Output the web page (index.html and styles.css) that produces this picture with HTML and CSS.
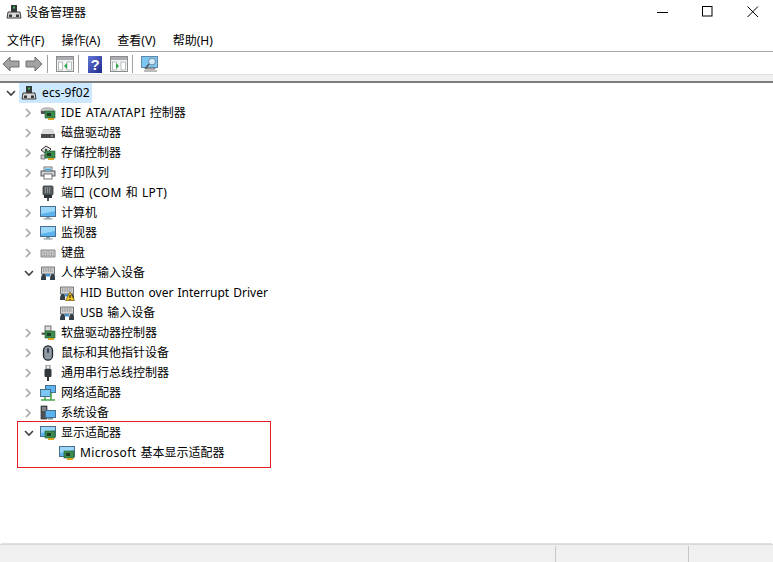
FILE: index.html
```html
<!DOCTYPE html>
<html lang="zh-CN">
<head>
<meta charset="utf-8">
<title>设备管理器</title>
<link rel="stylesheet" href="styles.css">
</head>
<body>
<svg class="defs" width="0" height="0" aria-hidden="true">
  <defs>
    <symbol id="chev-r" viewBox="0 0 10 12"><path d="M3 2l4 4-4 4" fill="none" stroke="#a6a6a6" stroke-width="1.6"/></symbol>
    <symbol id="chev-d" viewBox="0 0 12 10"><path d="M2 3l4 4 4-4" fill="none" stroke="#404040" stroke-width="1.6"/></symbol>
    <symbol id="host" viewBox="0 0 16 16"><rect x="5" y="1" width="6" height="7" fill="#33393c"/><rect x="7" y="2.5" width="2" height="2" fill="#3fc04a"/><path d="M2 8h12l1 6H1z" fill="#d9d9d9" stroke="#3a3a3a"/><rect x="3" y="10.5" width="3" height="2.5" fill="#33393c"/><rect x="10" y="10.5" width="3" height="2.500" fill="#33393c"/></symbol>
    <symbol id="card" viewBox="0 0 16 16"><rect x="5" y="6" width="10" height="7" fill="#3c8a4e" stroke="#1f5f30" stroke-width=".6"/><rect x="7" y="8" width="4" height="3" fill="#1d3d26"/><rect x="8" y="13" width="6" height="2" fill="#d9a520"/></symbol>
    <symbol id="ide" viewBox="0 0 16 16"><path d="M1 5c1-3 12-3 13 0v3H1z" fill="#c8c8c8" stroke="#808080" stroke-width=".6"/><rect x="1" y="6" width="9" height="3" fill="#555"/><use href="#card"/></symbol>
    <symbol id="disk" viewBox="0 0 16 16"><path d="M3 4h10l2 5H1z" fill="#dcdcdc"/><rect x="1" y="9" width="14" height="4" fill="#4a4a4a"/><rect x="11" y="10.5" width="2" height="1" fill="#9fe09f"/></symbol>
    <symbol id="store" viewBox="0 0 16 16"><path d="M1 5l5-4 5 3-5 5z" fill="#e5e5e5" stroke="#333" stroke-width="1"/><circle cx="6" cy="5" r="1.3" fill="#444"/><path d="M1 10h4v4H1z" fill="#ccc" stroke="#555" stroke-width=".7"/><use href="#card"/></symbol>
    <symbol id="printer" viewBox="0 0 16 16"><rect x="4" y="2" width="8" height="5" fill="#f5f5f5" stroke="#555" stroke-width=".8"/><rect x="1" y="6" width="14" height="5" fill="#d0d3d6" stroke="#333" stroke-width=".8"/><rect x="5" y="3.500" width="6" height="2" fill="#4aa3df"/><rect x="4" y="9" width="8" height="5" fill="#fff" stroke="#555" stroke-width=".8"/></symbol>
    <symbol id="port" viewBox="0 0 16 16"><rect x="3" y="1" width="10" height="9" rx="1" fill="#5a5f63" stroke="#2f3336" stroke-width=".8"/><path d="M5 3h6M5 5h6M5 7h6" stroke="#c9c9c9" stroke-width=".9" stroke-dasharray="1 1"/><path d="M4 10h8v3H4z" fill="#2f3336"/><rect x="7" y="13" width="2" height="3" fill="#555"/></symbol>
    <symbol id="monitor" viewBox="0 0 16 16"><rect x=".5" y="1.500" width="15" height="10" fill="#5cb4ee" stroke="#4a6f8c"/><path d="M1 2h14v4L1 9z" fill="#9ad6f8"/><path d="M6 12h4v1.500H6z" fill="#8aa0b0"/><rect x="3.500" y="13.500" width="9" height="1" fill="#7b8e9c"/></symbol>
    <symbol id="keyboard" viewBox="0 0 16 16"><path d="M1 5h14v7H1z" fill="#d4d4d4" stroke="#666" stroke-width=".8"/><path d="M2.500 7h11M2.500 8.700h11M2.500 10.400h11" stroke="#7b7b7b" stroke-width=".9" stroke-dasharray="1 .7"/></symbol>
    <symbol id="hid" viewBox="0 0 16 16"><path d="M1.500 2h13v7h-13z" fill="#d4d4d4" stroke="#555" stroke-width=".8"/><path d="M3 4h10M3 6h10" stroke="#6b6b6b" stroke-width=".9" stroke-dasharray="1 .7"/><path d="M1 15c0-5 1-6 3-6s2 1 2 6z" fill="#33404a"/><path d="M10 15c0-5 1-6 3-6s2 1 2 6z" fill="#33404a"/><rect x="6" y="9" width="4" height="2.500" fill="#3f94d8"/></symbol>
    <symbol id="warn" viewBox="0 0 16 16"><path d="M11 7l4.500 8.500h-9z" fill="#f7c325" stroke="#6b5200" stroke-width=".7"/><path d="M11 10v3M11 14v1" stroke="#222" stroke-width="1.100"/></symbol>
    <symbol id="floppy" viewBox="0 0 16 16"><rect x="5" y="1" width="6" height="5" fill="#ddd" stroke="#555" stroke-width=".8"/><path d="M1 7h10v3H1z" fill="#c8c8c8"/><rect x="2" y="8" width="7" height="1.500" fill="#444"/><use href="#card"/></symbol>
    <symbol id="mouse" viewBox="0 0 16 16"><rect x="3.500" y=".8" width="9" height="14.400" rx="4.500" fill="#8f99a3" stroke="#23282c" stroke-width="1.300"/><rect x="7" y="3" width="2" height="5" rx="1" fill="#39424a"/></symbol>
    <symbol id="usb" viewBox="0 0 16 16"><rect x="6" y="0" width="4" height="4" fill="#e8e8e8" stroke="#555" stroke-width=".7"/><rect x="4.500" y="4" width="7" height="8" rx="1" fill="#33373a"/><rect x="7" y="12" width="2" height="4" fill="#33373a"/></symbol>
    <symbol id="net" viewBox="0 0 16 16"><rect x="5.500" y=".5" width="10" height="7" fill="#5cb4ee" stroke="#4a6f8c"/><rect x=".5" y="4.500" width="10" height="7" fill="#7cc6f3" stroke="#4a6f8c"/><path d="M1 15h14M5 12v3M11 8v7" stroke="#46a84d" stroke-width="1.600"/></symbol>
    <symbol id="system" viewBox="0 0 16 16"><rect x="1" y="1" width="6" height="13" fill="#4c5156" stroke="#2f3336" stroke-width=".7"/><path d="M2 3h4M2 5h4" stroke="#bbb"/><rect x="5.500" y="5.500" width="10" height="7" fill="#5cb4ee" stroke="#4a6f8c"/><rect x="8" y="13" width="5" height="1.500" fill="#7b8e9c"/></symbol>
    <symbol id="display" viewBox="0 0 16 16"><rect x=".5" y="1.500" width="15" height="10" fill="#5cb4ee" stroke="#4a6f8c"/><path d="M1 2h14v3L1 8z" fill="#9ad6f8"/><use href="#card"/></symbol>
    <symbol id="panel" viewBox="0 0 18 17"><rect x=".5" y=".5" width="17" height="15" fill="#f3f3f3" stroke="#8c8c8c"/><rect x="1" y="1" width="16" height="3" fill="#a9adb1"/><rect x="2.500" y="6" width="4" height="8" fill="#fff" stroke="#9aa" stroke-width=".7"/><rect x="11" y="6" width="4.500" height="8" fill="#fff" stroke="#9aa" stroke-width=".7"/></symbol>
  </defs>
</svg>
<div class="window">
  <header class="titlebar">
    <div class="title-left"><svg class="ic16"><use href="#host"/></svg><span>设备管理器</span></div>
    <div class="win-btns">
      <svg class="win-btn" viewBox="0 0 12 12"><path d="M0 6.500h11" stroke="#000" fill="none"/></svg>
      <svg class="win-btn" viewBox="0 0 12 12"><rect x=".5" y=".5" width="9.500" height="9.500" stroke="#000" fill="none"/></svg>
      <svg class="win-btn" viewBox="0 0 12 12"><path d="M.5 .5l10.500 10.500M11 .5L.5 11" stroke="#000" fill="none"/></svg>
    </div>
  </header>
  <nav class="menubar"><span>文件(F)</span><span>操作(A)</span><span>查看(V)</span><span>帮助(H)</span></nav>
  <div class="toolbar">
    <svg class="tb-arrow" viewBox="0 0 18 16"><path d="M1 8l7-7v4h9v6H8v4z" fill="#a3a3a3" stroke="#6e6e6e"/></svg>
    <svg class="tb-arrow" viewBox="0 0 18 16"><path d="M17 8l-7-7v4H1v6h9v4z" fill="#a3a3a3" stroke="#6e6e6e"/></svg>
    <i class="sep"></i>
    <svg class="tb-panel" viewBox="0 0 18 17"><use href="#panel"/><path d="M11 7v6l-3-3z" fill="#2fa84a"/></svg>
    <i class="sep"></i>
    <svg class="tb-help" viewBox="0 0 14 17"><defs><linearGradient id="hg" x1="0" y1="0" x2="1" y2="1"><stop offset="0" stop-color="#6677d8"/><stop offset="1" stop-color="#1a2a8c"/></linearGradient></defs><rect width="14" height="17" fill="url(#hg)"/><text x="7" y="14" class="q">?</text></svg>
    <svg class="tb-panel" viewBox="0 0 18 17"><use href="#panel"/><path d="M6 7v6l3-3z" fill="#2fa84a"/></svg>
    <i class="sep"></i>
    <svg class="tb-scan" viewBox="0 0 18 17"><rect x=".5" y=".5" width="16" height="11" fill="#7cc6f3" stroke="#5e8aa8"/><path d="M5 12h9v1H5zM3 15h13" stroke="#777" fill="none"/><circle cx="11" cy="5.500" r="3.500" fill="#cfe9f8" stroke="#6d8899"/><path d="M8 8l-4 5" stroke="#555" stroke-width="1.500"/></svg>
  </div>
  <div class="band"></div>
  <main class="tree">
    <div class="row lvl0"><svg class="chev-d"><use href="#chev-d"/></svg><span class="root-sel"><svg class="ic16"><use href="#host"/></svg><span class="label tight">ecs-9f02</span></span></div>
    <div class="row lvl1"><svg class="chev-r"><use href="#chev-r"/></svg><svg class="ic16"><use href="#ide"/></svg><span class="label"><span class="lat">IDE ATA/ATAPI</span> 控制器</span></div>
    <div class="row lvl1"><svg class="chev-r"><use href="#chev-r"/></svg><svg class="ic16"><use href="#disk"/></svg><span class="label">磁盘驱动器</span></div>
    <div class="row lvl1"><svg class="chev-r"><use href="#chev-r"/></svg><svg class="ic16"><use href="#store"/></svg><span class="label">存储控制器</span></div>
    <div class="row lvl1"><svg class="chev-r"><use href="#chev-r"/></svg><svg class="ic16"><use href="#printer"/></svg><span class="label">打印队列</span></div>
    <div class="row lvl1"><svg class="chev-r"><use href="#chev-r"/></svg><svg class="ic16"><use href="#port"/></svg><span class="label">端口 <span class="lat">(COM</span> 和 <span class="lat">LPT)</span></span></div>
    <div class="row lvl1"><svg class="chev-r"><use href="#chev-r"/></svg><svg class="ic16"><use href="#monitor"/></svg><span class="label">计算机</span></div>
    <div class="row lvl1"><svg class="chev-r"><use href="#chev-r"/></svg><svg class="ic16"><use href="#monitor"/></svg><span class="label">监视器</span></div>
    <div class="row lvl1"><svg class="chev-r"><use href="#chev-r"/></svg><svg class="ic16"><use href="#keyboard"/></svg><span class="label">键盘</span></div>
    <div class="row lvl1"><svg class="chev-d"><use href="#chev-d"/></svg><svg class="ic16"><use href="#hid"/></svg><span class="label">人体学输入设备</span></div>
    <div class="row lvl2"><svg class="ic16"><use href="#hid"/><use href="#warn"/></svg><span class="label">HID Button over Interrupt Driver</span></div>
    <div class="row lvl2"><svg class="ic16"><use href="#hid"/></svg><span class="label">USB 输入设备</span></div>
    <div class="row lvl1"><svg class="chev-r"><use href="#chev-r"/></svg><svg class="ic16"><use href="#floppy"/></svg><span class="label">软盘驱动器控制器</span></div>
    <div class="row lvl1"><svg class="chev-r"><use href="#chev-r"/></svg><svg class="ic16"><use href="#mouse"/></svg><span class="label">鼠标和其他指针设备</span></div>
    <div class="row lvl1"><svg class="chev-r"><use href="#chev-r"/></svg><svg class="ic16"><use href="#usb"/></svg><span class="label">通用串行总线控制器</span></div>
    <div class="row lvl1"><svg class="chev-r"><use href="#chev-r"/></svg><svg class="ic16"><use href="#net"/></svg><span class="label">网络适配器</span></div>
    <div class="row lvl1"><svg class="chev-r"><use href="#chev-r"/></svg><svg class="ic16"><use href="#system"/></svg><span class="label">系统设备</span></div>
    <div class="highlighted">
      <div class="row lvl1"><svg class="chev-d"><use href="#chev-d"/></svg><svg class="ic16"><use href="#display"/></svg><span class="label">显示适配器</span></div>
      <div class="row lvl2"><svg class="ic16"><use href="#display"/></svg><span class="label"><span class="lat">Microsoft</span> 基本显示适配器</span></div>
      <div class="redbox"></div>
    </div>
  </main>
  <footer class="status">
    <div class="cell main"></div><div class="cell mid"></div><div class="cell end"></div>
  </footer>
</div>
</body>
</html>
```
FILE: styles.css
```css
* { box-sizing: border-box; }
html, body { margin: 0; padding: 0; }
body {
  width: 773px; height: 562px; overflow: hidden; background: #fff; color: #000;
  font-family: "Noto Sans", "Noto Sans CJK SC", sans-serif; font-size: 12px;
}
.defs { position: absolute; }
.window { display: flex; flex-direction: column; height: 562px; }
.titlebar { height: 26px; display: flex; justify-content: space-between; align-items: center; padding: 0 0 2px 6px; }
.title-left { display: flex; align-items: center; gap: 4px; font-size: 12px; }
.win-btns { display: flex; gap: 33px; padding-right: 14px; }
.win-btn { width: 12px; height: 12px; display: block; }
.ic16 { width: 16px; height: 16px; flex: none; display: block; }
.menubar { height: 26px; display: flex; align-items: center; gap: 17px; padding: 2px 0 0 7px; border-bottom: 1px solid #a9acb3; font-size: 12px; }
.toolbar { height: 22px; display: flex; align-items: center; padding: 2px 0 0 2px; }
.tb-arrow { width: 18px; height: 16px; flex: none; }
.tb-arrow + .tb-arrow { margin-left: 5px; }
.sep { width: 1px; height: 18px; background: #a0a0a0; margin: 0 8px 0 4px; flex: none; }
.tb-panel { width: 18px; height: 17px; flex: none; }
.tb-help { width: 14px; height: 17px; margin: 0 8px 0 1px; flex: none; }
.tb-scan { width: 18px; height: 17px; flex: none; }
.q { font: bold 15px "Liberation Sans", sans-serif; fill: #fff; text-anchor: middle; }
.band { height: 9px; background: #f0f0f0; border-top: 1px solid #e3e3e3; border-bottom: 2px solid #7d7d7d; flex: none; }
.tree { flex: 1; display: flex; flex-direction: column; min-height: 0; }
.row { height: 20px; display: flex; align-items: center; flex: none; }
.lvl0 { padding-left: 5px; }
.lvl1 { padding-left: 23px; }
.lvl2 { padding-left: 59px; }
.chev-r { width: 10px; height: 12px; margin-right: 7px; flex: none; }
.chev-d { width: 12px; height: 10px; margin-right: 5px; flex: none; }
.lvl0 .chev-d { margin-right: 2px; }
.root-sel { display: flex; align-items: center; height: 20px; width: 73px; padding-left: 2px; background: #cce8ff; }
.label { margin-left: 5px; white-space: nowrap; line-height: 20px; word-spacing: 1px; }
.label.tight { letter-spacing: .12px; }
.lat { letter-spacing: .35px; }
.highlighted { position: relative; }
.redbox { position: absolute; left: 17px; top: -2px; width: 254px; height: 47px; border: 1px solid #e21a22; }
.status { height: 18px; margin-top: auto; border-top: 1px solid #d9d9d9; display: flex; background: #f0f0f0; box-shadow: 0 -2px 0 -1px #e0e0e0; flex: none; }
.cell { border-right: 1px solid #c8c8c8; margin-top: 1px; }
.cell.main { width: 556px; }
.cell.mid { width: 133px; }
.cell.end { flex: 1; border: 0; }
```
